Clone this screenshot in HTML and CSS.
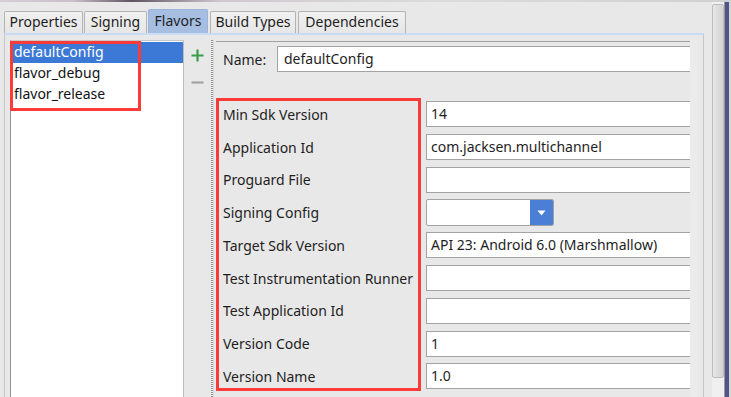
FILE: index.html
```html
<!DOCTYPE html>
<html lang="en">
<head>
    <meta charset="UTF-8">
    <meta name="viewport" content="width=device-width, initial-scale=1.0">
    <title>Flavors</title>
    <link rel="stylesheet" href="styles.css">
</head>
<body>
    <div class="topline"></div>
    <div class="window">
        <div class="main">
            <div class="tabs">
                <div class="tab w-props">Properties</div>
                <div class="tab w-sign">Signing</div>
                <div class="tab active w-flav">Flavors</div>
                <div class="tab w-build">Build Types</div>
                <div class="tab w-deps">Dependencies</div>
            </div>

            <div class="panel">
                <div class="list">
                    <div class="item selected">defaultConfig</div>
                    <div class="item">flavor_debug</div>
                    <div class="item">flavor_release</div>
                    <div class="mark"></div>
                </div>

                <div class="tools">
                    <svg class="tool" width="13" height="13" viewBox="0 0 13 13">
                        <path d="M6.5 0.5v12M0.5 6.5h12" stroke="#3a9d4b" stroke-width="2.2" fill="none"/>
                    </svg>
                    <svg class="tool" width="13" height="13" viewBox="0 0 13 13">
                        <path d="M0.5 6.5h12" stroke="#a3a3a3" stroke-width="2.2" fill="none"/>
                    </svg>
                </div>

                <div class="splitter"><div class="dots"></div></div>

                <div class="form">
                    <div class="name-row">
                        <span class="name-label">Name:</span>
                        <div class="field name-field">defaultConfig</div>
                    </div>

                    <div class="fields">
                        <div class="labels">
                            <div class="row">Min Sdk Version</div>
                            <div class="row">Application Id</div>
                            <div class="row">Proguard File</div>
                            <div class="row">Signing Config</div>
                            <div class="row">Target Sdk Version</div>
                            <div class="row">Test Instrumentation Runner</div>
                            <div class="row">Test Application Id</div>
                            <div class="row">Version Code</div>
                            <div class="row">Version Name</div>
                        </div>
                        <div class="inputs">
                            <div class="row"><div class="field">14</div></div>
                            <div class="row"><div class="field">com.jacksen.multichannel</div></div>
                            <div class="row"><div class="field"></div></div>
                            <div class="row">
                                <div class="combo">
                                    <div class="combo-value"></div>
                                    <div class="combo-btn">
                                        <svg width="9" height="6" viewBox="0 0 9 6"><path d="M0.5 0.5h8l-4 5z" fill="#fff"/></svg>
                                    </div>
                                </div>
                            </div>
                            <div class="row"><div class="field">API 23: Android 6.0 (Marshmallow)</div></div>
                            <div class="row"><div class="field"></div></div>
                            <div class="row"><div class="field"></div></div>
                            <div class="row"><div class="field">1</div></div>
                            <div class="row"><div class="field">1.0</div></div>
                        </div>
                    </div>
                </div>

                <div class="gutter"></div>
            </div>
        </div>

        <div class="scroll"><div class="thumb"></div></div>
        <div class="edge"></div>
    </div>
</body>
</html>
```

FILE: styles.css
```css
body {
    margin: 0;
    width: 731px;
    height: 397px;
    overflow: hidden;
    background-color: #e8e8e8;
    font-family: 'Noto Sans', 'Open Sans', sans-serif;
    font-size: 14px;
    color: #1e1e1e;
}
.topline {
    height: 2px;
    background: linear-gradient(to right, #d6cfd6, #cbbfca 10%, #5f5262 18%, #cfc8cf 30%, #dcdcdc 60%, #d0d0d0);
}
.window {
    display: flex;
    height: 395px;
}
.main {
    width: 708px;
    padding-left: 4px;
    display: flex;
    flex-direction: column;
}

/* pestañas */
.tabs {
    display: flex;
    align-items: flex-end;
    height: 31px;
}
.tab {
    height: 21px;
    line-height: 20px;
    text-align: center;
    border: 1px solid #b3b3b3;
    border-bottom: none;
    border-radius: 2px 2px 0 0;
    background: linear-gradient(#f1f1f1, #e6e6e6);
    margin-right: 1px;
    box-sizing: content-box;
}
.tab.active {
    height: 23px;
    line-height: 21px;
    background: #a7bee3;
    border-color: #9db4da;
}
.w-props { width: 77px; }
.w-sign { width: 61px; }
.w-flav { width: 58px; margin-right: 2px; }
.w-build { width: 84px; margin-right: 2px; }
.w-deps { width: 106px; }

/* panel */
.panel {
    flex: 1;
    width: 693px;
    display: flex;
    border-top: 2px solid #c9dcf3;
    border-left: 1px solid #c6c6c6;
    border-right: 1px solid #c6c6c6;
    padding: 5px 0 0 5px;
    min-height: 0;
}
.list {
    position: relative;
    width: 172px;
    flex-shrink: 0;
    background-color: #fff;
    border-left: 1px solid #8a94a3;
    border-right: 1px solid #bdbdbd;
    border-top: 1px solid #c8c8c8;
    padding-top: 1px;
}
.item {
    height: 21px;
    line-height: 20px;
    padding-left: 3px;
    color: #111;
}
.item.selected {
    background-color: #3c79d7;
    color: #fff;
}
.mark {
    position: absolute;
    left: -1px;
    top: 0;
    width: 131px;
    height: 70px;
    border: 3px solid #fb3a3a;
    box-sizing: border-box;
}
.tools {
    width: 23px;
    flex-shrink: 0;
    display: flex;
    flex-direction: column;
    align-items: center;
    gap: 14px;
    padding-top: 9px;
}
.tool {
    display: block;
    margin-left: 3px;
}
.splitter {
    width: 9px;
    flex-shrink: 0;
    display: flex;
    justify-content: center;
}
.dots {
    width: 2px;
    margin-left: 1px;
    background: repeating-linear-gradient(#8e8e8e 0 1px, #f4f4f4 1px 2px);
    border-right: 1px solid #d8d8d8;
}

/* formulario */
.form {
    width: 474px;
    flex-shrink: 0;
    overflow: hidden;
    margin-top: 1px;
    border-top: 1px solid #a0a0a0;
}
.name-row {
    display: flex;
    align-items: center;
    padding: 4px 0 0 7px;
    height: 26px;
    margin-bottom: 26px;
}
.name-label {
    width: 54px;
    flex-shrink: 0;
}
.field {
    height: 24px;
    line-height: 23px;
    background-color: #fff;
    border: 1px solid #a3a3a3;
    border-right: none;
    padding-left: 4px;
    width: 290px;
    flex-shrink: 0;
    white-space: nowrap;
}
.name-field {
    flex: 1;
    padding-left: 6px;
}
.fields {
    display: flex;
}
.labels {
    width: 198px;
    flex-shrink: 0;
    padding-left: 7px;
    outline: 3px solid #fb3a3a;
    outline-offset: -3px;
    height: 293px;
}
.row {
    height: 32.75px;
    display: flex;
    align-items: center;
    white-space: nowrap;
}
.inputs {
    margin-left: 5px;
    flex: 1;
    min-width: 0;
}
.combo {
    width: 126px;
    height: 25px;
    display: flex;
    border: 1px solid #a3a3a3;
    border-radius: 2px;
    background-color: #fff;
    overflow: hidden;
}
.combo-value {
    flex: 1;
}
.combo-btn {
    width: 23px;
    background-color: #4a7fd5;
    display: flex;
    align-items: center;
    justify-content: center;
}
.gutter {
    width: 8px;
    flex-shrink: 0;
    background-color: #ebebeb;
}

/* barra lateral */
.scroll {
    width: 12px;
    margin-left: 3px;
    padding-top: 2px;
    background-color: #f0f0f0;
}
.thumb {
    height: 374px;
    border: 1px solid #bdbdbd;
    border-radius: 2px;
    background: linear-gradient(to right, #e6e6e6, #d3d3d3);
    box-sizing: border-box;
}
.edge {
    width: 7px;
    border-left: 1px solid #9a9a9a;
    border-right: 2px solid #d5d5d5;
    background-color: #4e5687;
    box-sizing: border-box;
}
```
